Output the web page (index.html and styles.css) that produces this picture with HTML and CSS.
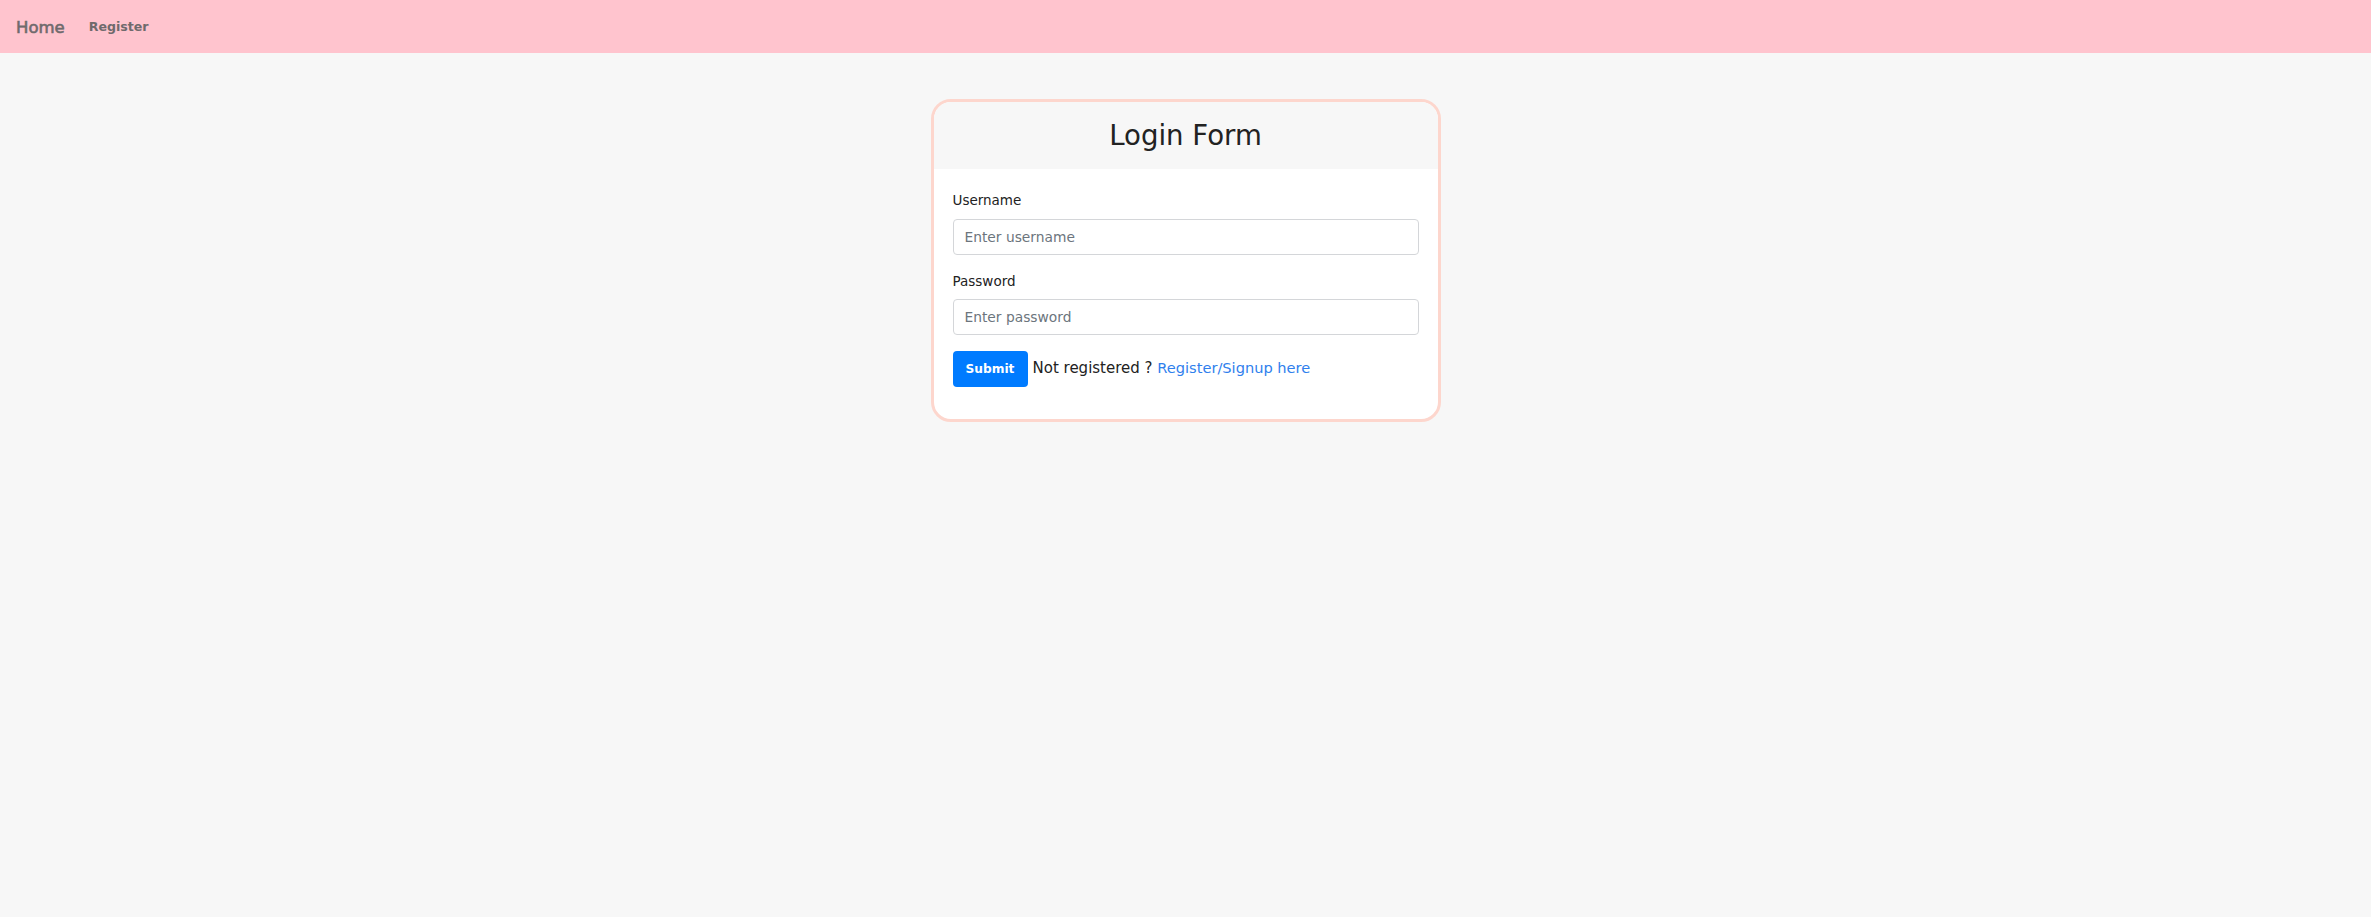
FILE: index.html
```html
<!DOCTYPE html>
<html lang="en">
<head>
<meta charset="utf-8">
<title>Login</title>
<link rel="stylesheet" href="styles.css">
</head>
<body>
<nav class="navbar">
  <a class="brand" href="#">Home</a>
  <a class="nav-link" href="#">Register</a>
</nav>
<main class="main">
  <div class="card">
    <div class="card-header">
      <h3 class="card-title">Login Form</h3>
    </div>
    <div class="card-body">
      <form class="form">
        <div class="form-group">
          <label class="label" for="username">Username</label>
          <input class="input" id="username" type="text" placeholder="Enter username">
        </div>
        <div class="form-group">
          <label class="label" for="password">Password</label>
          <input class="input" id="password" type="password" placeholder="Enter password">
        </div>
        <div class="actions">
          <button class="btn" type="button">Submit</button>
          <span class="note">Not registered ? <a class="link" href="#">Register/Signup here</a></span>
        </div>
      </form>
    </div>
  </div>
</main>
</body>
</html>
```
FILE: styles.css
```css
* { box-sizing: border-box; }
html, body { margin: 0; padding: 0; }
body {
  background: #f7f7f7;
  font-family: "DejaVu Sans", "Liberation Sans", sans-serif;
  color: #212529;
  min-height: 917px;
}
.navbar {
  height: 53px;
  background: #ffc4ce;
  display: flex;
  align-items: center;
  padding: 0 16px;
  gap: 24px;
}
.brand {
  color: #6f6a6c;
  text-decoration: none;
  font-size: 16.5px;
  font-weight: normal;
  -webkit-text-stroke: 0.6px #6f6a6c;
  margin-top: 1px;
}
.nav-link {
  color: #6f6a6c;
  text-decoration: none;
  font-size: 12.6px;
  font-weight: bold;
  margin-top: -1px;
}
.main {
  display: flex;
  justify-content: center;
  padding-top: 46px;
}
.card {
  width: 510px;
  border: 3px solid #fdd6cd;
  border-radius: 20px;
  background: #fff;
  overflow: hidden;
}
.card-header {
  background: #f7f7f7;
  padding: 16px 20px;
  text-align: center;
}
.card-title {
  margin: 0;
  font-size: 27.6px;
  line-height: 35px;
  font-weight: normal;
  color: #222;
}
.card-body {
  padding: 21px 19px 32px;
}
.form { display: flex; flex-direction: column; gap: 16px; }
.form-group { display: flex; flex-direction: column; gap: 8px; }
.label {
  font-size: 13.5px;
  line-height: 20.5px;
  color: #222;
}
.input {
  height: 36px;
  border: 1px solid #d4d6d9;
  border-radius: 4px;
  padding: 0 11px;
  font-family: inherit;
  font-size: 13.8px;
  color: #495057;
  background: #fff;
}
.input::placeholder { color: #6c757d; }
.actions {
  display: flex;
  align-items: center;
  gap: 5px;
}
.btn {
  height: 36px;
  width: 75px;
  border: none;
  border-radius: 4px;
  background: #007bff;
  color: #fff;
  font-family: inherit;
  font-size: 12.2px;
  font-weight: bold;
  padding: 0;
}
.note {
  font-size: 15px;
  color: #222;
  margin-top: -2px;
}
.link {
  color: #2f80ed;
  text-decoration: none;
  font-size: 14.6px;
}
```
